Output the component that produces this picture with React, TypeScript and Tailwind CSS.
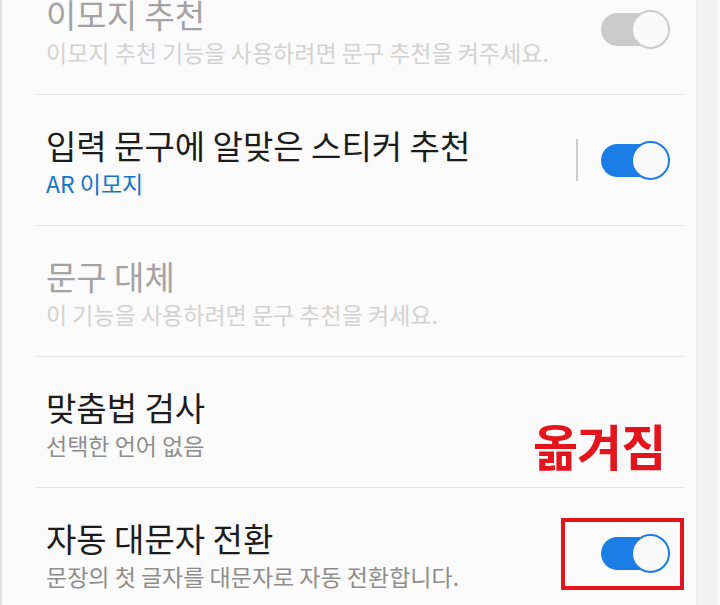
import React from "react";

type Row = {
  title: string;
  sub: string;
  tone: "normal" | "disabled" | "link";
  toggle?: "on" | "off";
  divider?: boolean;
};

const rows: Row[] = [
  { title: "이모지 추천", sub: "이모지 추천 기능을 사용하려면 문구 추천을 켜주세요.", tone: "disabled", toggle: "off" },
  { title: "입력 문구에 알맞은 스티커 추천", sub: "AR 이모지", tone: "link", toggle: "on", divider: true },
  { title: "문구 대체", sub: "이 기능을 사용하려면 문구 추천을 켜세요.", tone: "disabled" },
  { title: "맞춤법 검사", sub: "선택한 언어 없음", tone: "normal" },
  { title: "자동 대문자 전환", sub: "문장의 첫 글자를 대문자로 자동 전환합니다.", tone: "normal", toggle: "on" },
];

function Toggle({ on }: { on: boolean }) {
  return (
    <div className="relative mr-[13px] h-[39px] w-[69px]">
      <div
        className={`absolute left-0 top-[3px] h-[33px] w-[56px] rounded-full ${
          on ? "bg-[#1a7ee6]" : "bg-[#cbcbcb]"
        }`}
      />
      <div
        className={`absolute right-0 top-0 h-[39px] w-[39px] rounded-full border-2 bg-[#fafafa] ${
          on ? "border-[#1a7ee6]" : "border-[#cbcbcb]"
        }`}
      />
    </div>
  );
}

export default function App() {
  return (
    <div
      className="relative flex h-[605px] w-[720px] overflow-hidden bg-[#fafafa]"
      style={{ fontFamily: '"Noto Sans CJK KR", "Noto Sans", sans-serif' }}
    >
      <div className="flex-1 border-l-2 border-[#e2e2e2] bg-[#fbfbfb]">
        <div className="-mt-[36px]">
          {rows.map((r, i) => (
            <div key={i}>
              {i > 0 && <div className="ml-[35px] mr-[13px] h-px bg-[#e3e3e3]" />}
              <div className="ml-[35px] mr-[13px] flex h-[130px] items-center pl-[9px]">
                <div className="flex-1 self-start pt-[29px]">
                  <div
                    className={`text-[33px] leading-[42px] ${
                      r.tone === "disabled" ? "text-[#a3a3a3]" : "text-[#1c1c1c]"
                    }`}
                  >
                    {r.title}
                  </div>
                  <div
                    className={`mt-[2px] text-[23px] leading-[30px] ${
                      r.tone === "disabled"
                        ? "text-[#d2d2d2]"
                        : r.tone === "link"
                        ? "text-[#1574c8]"
                        : "text-[#8d8d8d]"
                    }`}
                  >
                    {r.sub}
                  </div>
                </div>
                {r.divider && <div className="mr-[23px] h-[42px] w-[2px] bg-[#cdcdcd]" />}
                {r.toggle && <Toggle on={r.toggle === "on"} />}
              </div>
            </div>
          ))}
        </div>
      </div>
      <div className="w-[24px] border-l border-[#ececec] bg-[#f2f2f2]">
        <div className="ml-auto h-full w-[2px] bg-[#fafafa]" />
      </div>

      {/* annotation */}
      <div className="absolute left-[533px] top-[414px] text-[49px] font-bold leading-[62px] tracking-[-1px] text-[#e3141c]">
        옮겨짐
      </div>
      <div className="absolute left-[561px] top-[518px] h-[72px] w-[123px] border-4 border-[#e3141c]" />
    </div>
  );
}
